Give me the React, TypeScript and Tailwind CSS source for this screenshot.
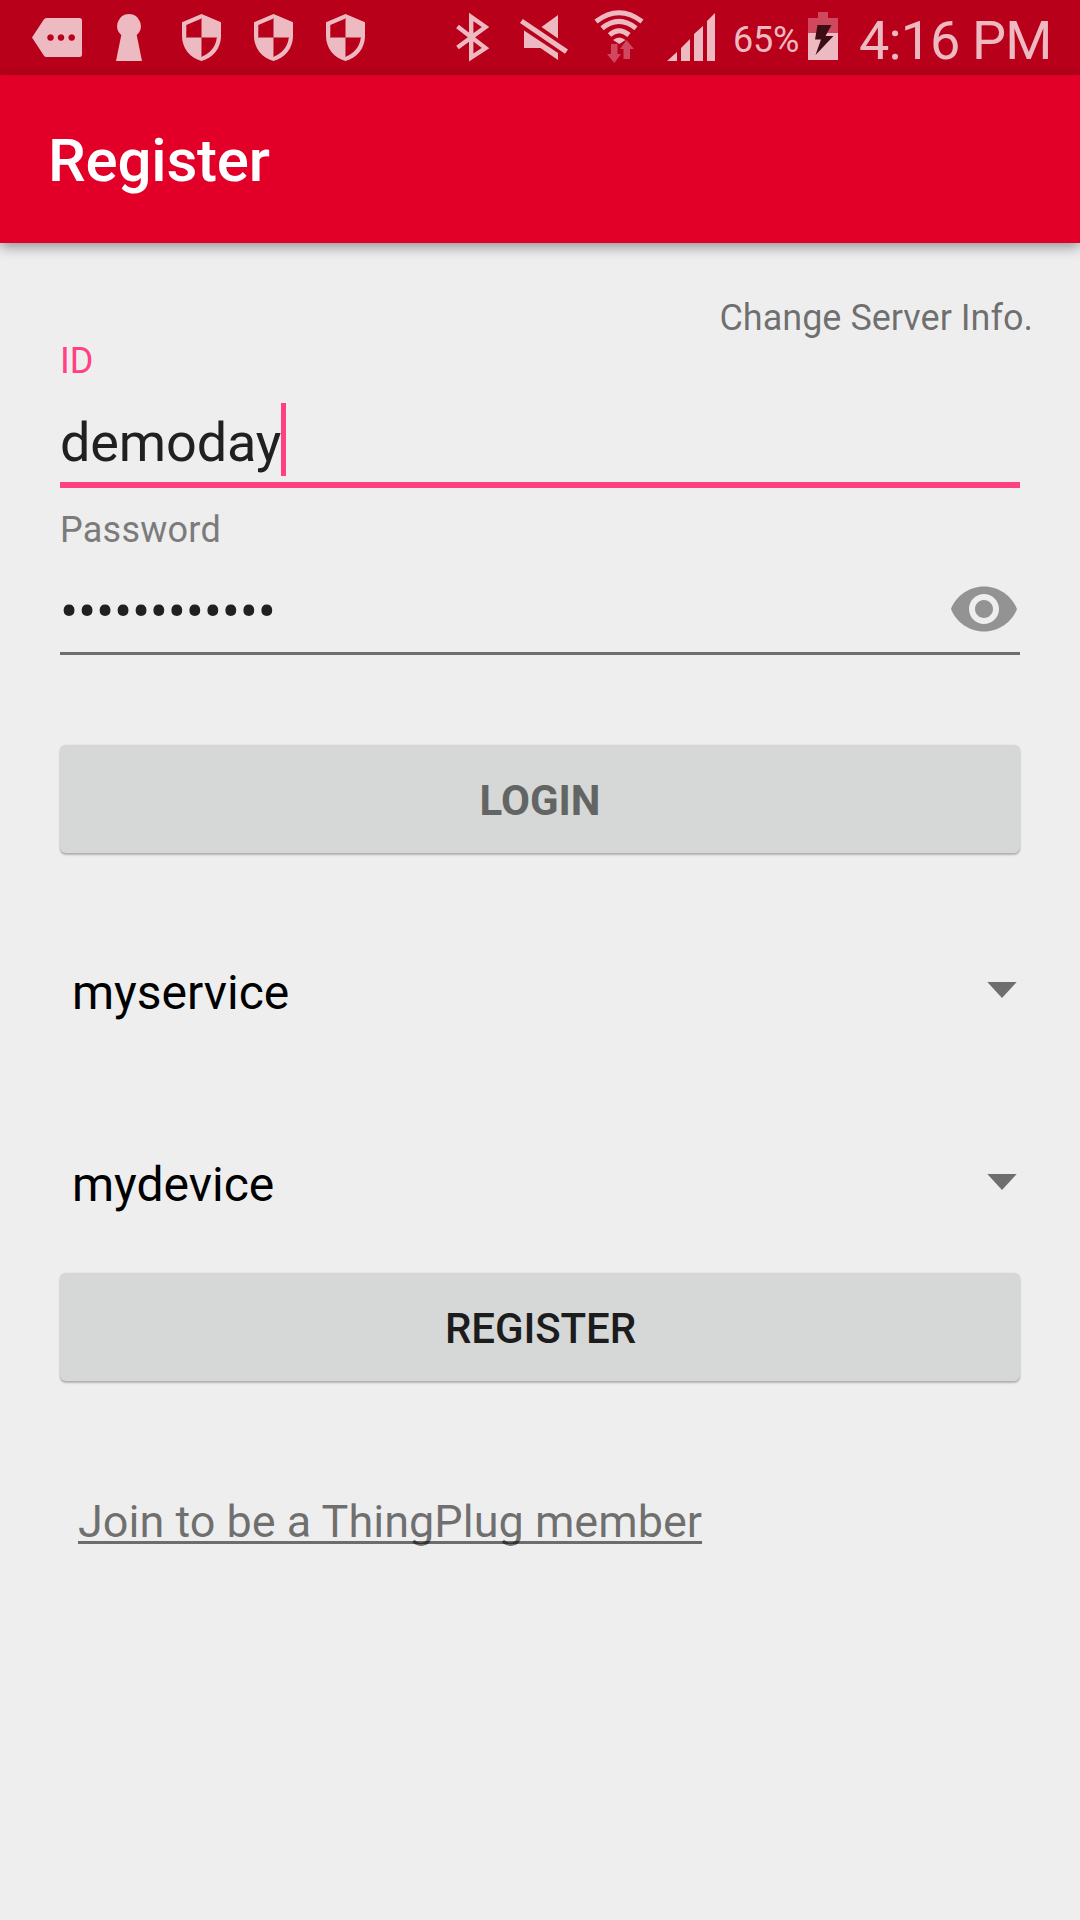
import React from "react";

type IconProps = { x: number; w: number; className?: string; children: React.ReactNode };

/* Status bar glyph: full bar height, viewBox in bar coordinates. */
function BarIcon({ x, w, className = "", children }: IconProps) {
  return (
    <svg width={w} height={75} viewBox={`${x} 0 ${w} 75`} fill="#edbac2" className={`shrink-0 ${className}`}>
      {children}
    </svg>
  );
}

function Shield({ className }: { className?: string }) {
  return (
    <BarIcon x={182} w={40} className={className}>
      <path
        fillRule="evenodd"
        d="M201.5 14L221 22.3V36C221 48 213 58 201.5 61C190 58 182 48 182 36V22.3ZM201 18.7L186.3 25V37H201ZM202 38V56.5C210 53.500 216 46.500 216.700 38Z"
      />
      <path d="M201 18H202V57H201ZM186 37H217V38H186Z" fill="#cf5c6c" />
    </BarIcon>
  );
}

function StatusBar() {
  return (
    <div className="flex h-[75px] items-start bg-[#b9001b] pl-8 text-[#edbac2]">
      <BarIcon x={32} w={50}>
        <path
          fillRule="evenodd"
          d="M46.500 18H79.500Q82 18 82 20.500V54.500Q82 57 79.500 57H46.500Q44.800 57 43.800 55.500L32 37.500L43.800 19.500Q44.800 18 46.500 18ZM50.500 34.200a3.300 3.300 0 1 0 .01 0ZM61 34.200a3.300 3.300 0 1 0 .01 0ZM71.700 34.200a3.300 3.300 0 1 0 .01 0Z"
        />
      </BarIcon>
      <BarIcon x={116} w={26} className="ml-[34px]">
        <path d="M129 14A12 12 0 0 1 136.700 35L142 61H116L121.300 35A12 12 0 0 1 129 14Z" />
      </BarIcon>
      <Shield className="ml-10" />
      <Shield className="ml-8" />
      <Shield className="ml-8" />
      <BarIcon x={456} w={34} className="ml-[90px]">
        <path
          d="M457.500 26.500L485.500 48L471.200 57.500V17L485.500 27L457.500 47.500"
          fill="none"
          stroke="#edbac2"
          strokeWidth="4.400"
          strokeMiterlimit="10"
        />
      </BarIcon>
      <BarIcon x={520} w={48} className="ml-[30px]">
        <path d="M522.800 19L568 49.500L565 53.700L520 23ZM558 15V38.500L541.500 27ZM524 30.500L558 53V60L540.500 48H524Z" />
      </BarIcon>
      <BarIcon x={593} w={52} className="ml-[25px]">
        <g fill="none" stroke="#edbac2" strokeWidth="5">
          <path d="M596 21.500Q619 4 642 21.500" />
          <path d="M602 28.300Q619 14.500 636 28.300" />
          <path d="M609.500 35Q619 26.500 629 35" />
        </g>
        <path d="M613 40Q619.300 35 625.500 40L619.300 44Z" />
        <path d="M611 44H617.500V54H621L614.300 63L607 54H611ZM626.500 40L634 49H630V59H623.500V49H620Z" fill="#d0485d" />
      </BarIcon>
      <BarIcon x={667} w={48} className="ml-[22px]">
        <path d="M667 61L677 52V61ZM681 61V48L690 39V61ZM694 61V34L703 26V61ZM707 61V21L715 13V61Z" />
      </BarIcon>
      <span className="ml-[18px] w-[75px] pt-[19px] text-[36px] leading-[42px] tracking-[-0.2px]">65%</span>
      <BarIcon x={808} w={30}>
        <path d="M818 12H828V18H838V33H808V18H818Z" fill="#d0485d" />
        <path d="M808 33H838V60H808Z" />
        <path d="M817.500 25H831.500L825.500 36H833.500L815.500 55L821 39.500H815Z" fill="#3d0d16" />
      </BarIcon>
      <span className="ml-[21px] whitespace-nowrap pt-[10px] text-[54px] leading-[62px] tracking-[-0.9px]">4:16 PM</span>
    </div>
  );
}

function Spinner({ label }: { label: string }) {
  return (
    <button className="flex h-24 w-full items-center justify-between pl-3 text-left text-[48px] leading-[60px] text-black">
      <span>{label}</span>
      <svg width="30" height="16" viewBox="0 0 30 16" className="mr-[3px] mb-[6px]">
        <path d="M0.300 0H29.700L15 16Z" fill="#6e6e6e" />
      </svg>
    </button>
  );
}

const raised =
  "flex h-[108px] w-full items-center justify-center rounded-[6px] bg-[#d6d8d7] pt-[3px] text-[42px] leading-[50px] shadow-[0_2px_2px_rgba(0,0,0,0.24),0_0_2px_rgba(0,0,0,0.12)]";

export default function App() {
  return (
    <div className="flex h-[1920px] w-[1080px] flex-col overflow-hidden bg-[#eeeeee] font-[Roboto,sans-serif]">
      <StatusBar />
      <header className="relative flex h-[168px] items-center bg-[#e30028] pt-[4px] pl-12 shadow-[0_4px_12px_rgba(0,0,0,0.38)]">
        <h1 className="text-[60px] leading-[70px] font-medium tracking-[-0.2px] text-white">Register</h1>
      </header>

      <main className="flex flex-col px-[60px] pt-[54px]">
        <a className="-mr-[13px] self-end text-[36px] leading-[42px] text-black/54">Change Server Info.</a>

        <label className="mt-px text-[36px] leading-[42px] text-[#ff4081]">ID</label>
        <div className="flex h-[106px] items-start border-b-[6px] border-[#ff4081] pt-[21px] text-[54px] leading-[80px] tracking-[-0.15px] text-[#202020]">
          <span>demoday</span>
          <span className="h-[73px] w-[5px] bg-[#ff4081]" />
        </div>

        <label className="mt-[21px] text-[36px] leading-[42px] tracking-[0.25px] text-[#7b7b7b]">Password</label>
        <div className="flex h-[104px] items-start justify-between border-b-[3px] border-[#6e6e6e] pt-[22px] text-[54px] leading-[78px] text-[#202020]">
          <span className="tracking-[-0.25px]">••••••••••••</span>
          <svg width="72" height="72" viewBox="0 0 24 24" fill="#939393">
            <path d="M12 4.500C7 4.500 2.730 7.610 1 12c1.730 4.390 6 7.500 11 7.500s9.270-3.110 11-7.500c-1.730-4.390-6-7.500-11-7.500zM12 17c-2.760 0-5-2.240-5-5s2.240-5 5-5 5 2.240 5 5-2.240 5-5 5zm0-8c-1.660 0-3 1.340-3 3s1.340 3 3 3 3-1.340 3-3-1.340-3-3-3z" />
          </svg>
        </div>

        <div className="mt-[90px]">
          <button className={`${raised} font-bold text-[#636564]`}>LOGIN</button>
        </div>
        <div className="mt-[92px]">
          <Spinner label="myservice" />
        </div>
        <div className="mt-24">
          <Spinner label="mydevice" />
        </div>
        <div className="mt-[40px]">
          <button className={`${raised} pl-px font-medium tracking-[-0.1px] text-[#1c1c1c]`}>REGISTER</button>
        </div>

        <a className="mt-[111px] ml-[18px] self-start text-[45px] leading-[60px] text-black/54 underline decoration-[2.500px] underline-offset-[4px] [text-decoration-skip-ink:none]">
          Join to be a ThingPlug member
        </a>
      </main>
    </div>
  );
}
